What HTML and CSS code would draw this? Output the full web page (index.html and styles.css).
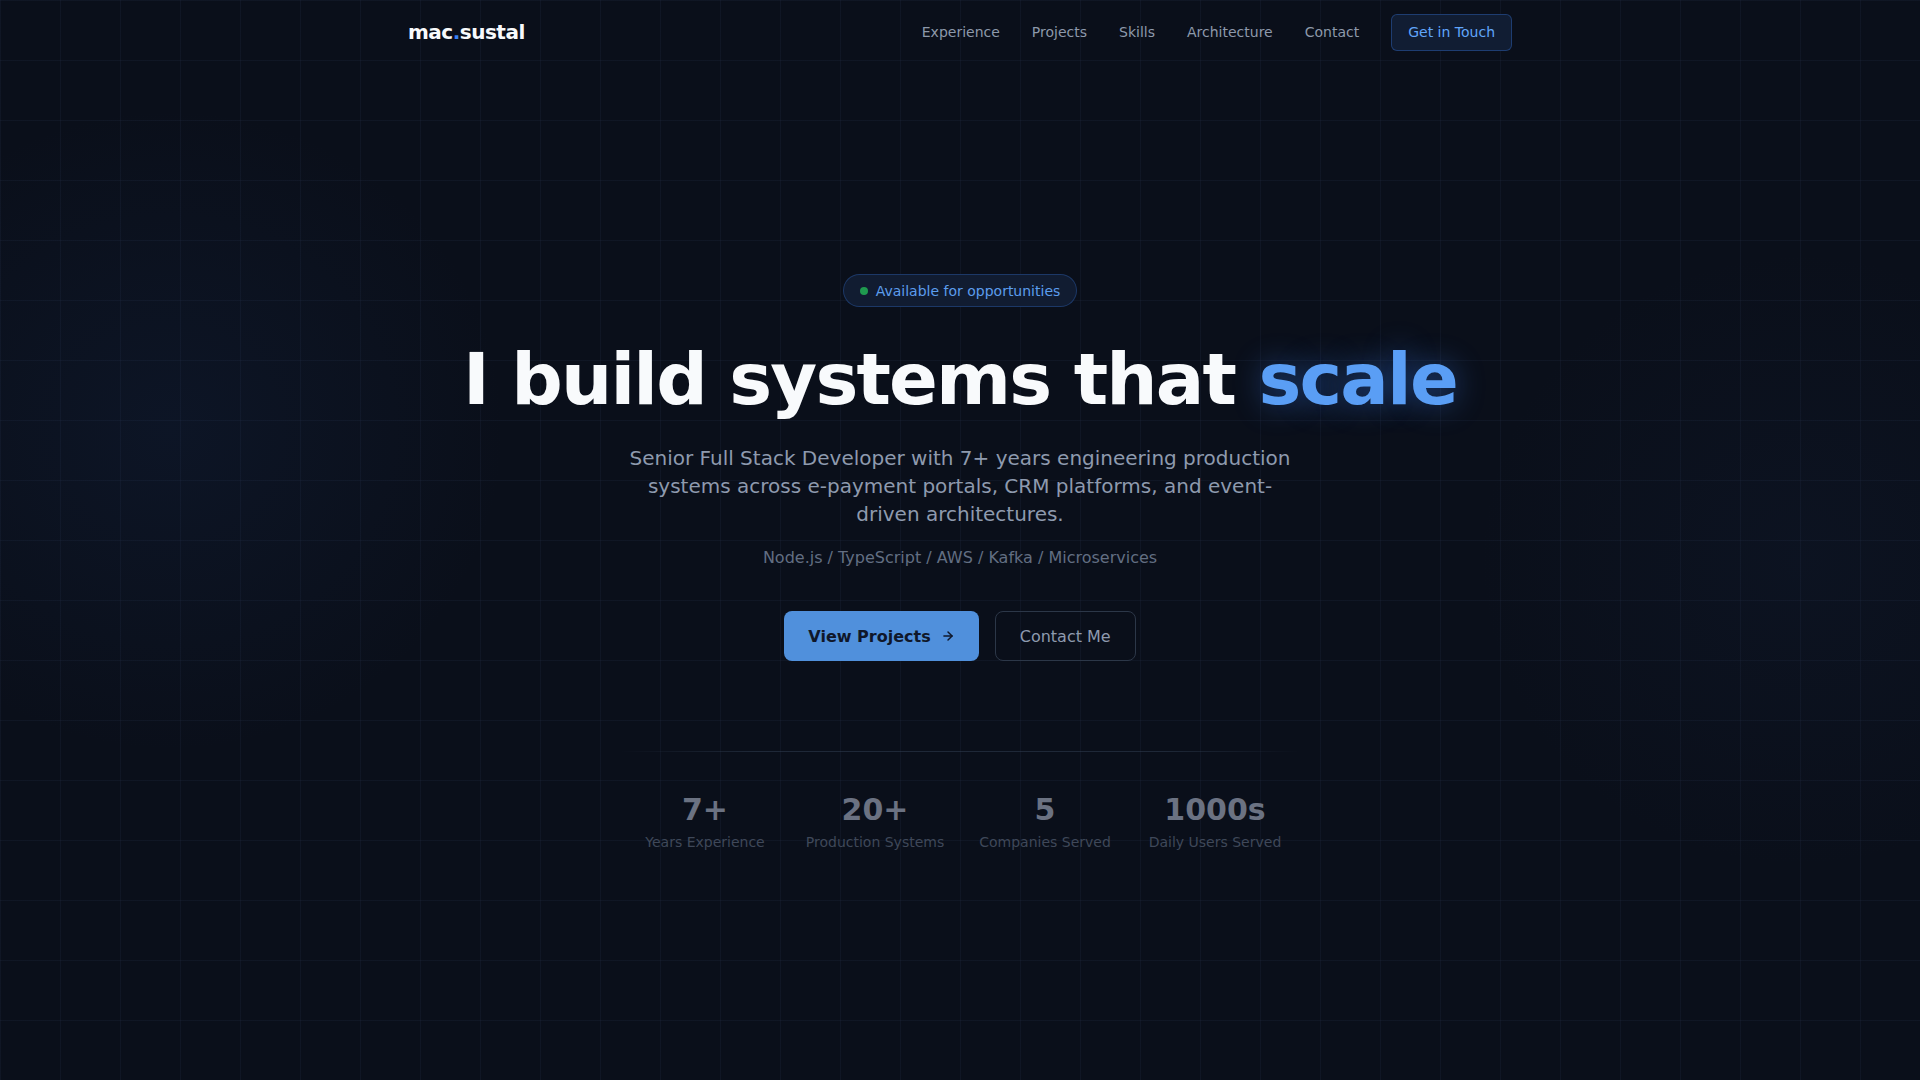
FILE: index.html
```html
<!DOCTYPE html>
<html lang="en">
<head>
<meta charset="utf-8">
<title>mac.sustal</title>
<link rel="stylesheet" href="styles.css">
</head>
<body>
<div class="page">
  <header class="nav">
    <div class="nav-inner">
      <a class="logo" href="#">mac<span class="dot">.</span>sustal</a>
      <nav class="links">
        <a href="#">Experience</a>
        <a href="#">Projects</a>
        <a href="#">Skills</a>
        <a href="#">Architecture</a>
        <a href="#">Contact</a>
        <a class="cta" href="#">Get in Touch</a>
      </nav>
    </div>
  </header>
  <main class="hero">
    <div class="badge"><span class="pulse"></span>Available for opportunities</div>
    <h1 class="title">I build systems that <span class="accent">scale</span></h1>
    <p class="lead">Senior Full Stack Developer with 7+ years engineering production systems across e-payment portals, CRM platforms, and event-driven architectures.</p>
    <p class="stack">Node.js / TypeScript / AWS / Kafka / Microservices</p>
    <div class="actions">
      <a class="btn primary" href="#">View Projects
        <svg width="14" height="14" viewBox="0 0 24 24" fill="none" stroke="currentColor" stroke-width="2.5" stroke-linecap="round" stroke-linejoin="round"><path d="M5 12h14"/><path d="M12 5l7 7-7 7"/></svg>
      </a>
      <a class="btn ghost" href="#">Contact Me</a>
    </div>
    <div class="stats">
      <div class="stat"><div class="num">7+</div><div class="label">Years Experience</div></div>
      <div class="stat"><div class="num">20+</div><div class="label">Production Systems</div></div>
      <div class="stat"><div class="num">5</div><div class="label">Companies Served</div></div>
      <div class="stat"><div class="num">1000s</div><div class="label">Daily Users Served</div></div>
    </div>
  </main>
</div>
</body>
</html>
```

FILE: styles.css
```css
* { box-sizing: border-box; margin: 0; padding: 0; }
html, body { height: 100%; }
body {
  font-family: "DejaVu Sans", Verdana, sans-serif;
  background-color: #0a0f1a;
  color: #e2e8f0;
  overflow: hidden;
}
.page {
  min-height: 100vh;
  background-image:
    radial-gradient(ellipse 480px 460px at 170px 430px, rgba(30, 58, 110, 0.14), transparent 70%),
    radial-gradient(ellipse 460px 440px at 1800px 560px, rgba(30, 50, 90, 0.11), transparent 70%),
    linear-gradient(rgba(40, 52, 78, 0.2) 1px, transparent 1px),
    linear-gradient(90deg, rgba(40, 52, 78, 0.2) 1px, transparent 1px);
  background-size: auto, auto, 60px 60px, 60px 60px;
}
a { text-decoration: none; color: inherit; }

.nav { height: 64px; }
.nav-inner {
  max-width: 1152px;
  margin: 0 auto;
  padding: 0 24px;
  height: 100%;
  display: flex;
  align-items: center;
  justify-content: space-between;
}
.logo {
  font-size: 20px;
  font-weight: 700;
  letter-spacing: -0.5px;
  color: #f8fafc;
}
.logo .dot { color: #3b82f6; }
.links { display: flex; align-items: center; gap: 32px; font-size: 14px; }
.links a { color: #8d99ab; }
.links .cta {
  color: #60a5fa;
  background: #111d33;
  border: 1px solid rgba(59, 130, 246, 0.32);
  border-radius: 6px;
  padding: 9px 16px;
  line-height: 17px;
}

.hero {
  display: flex;
  flex-direction: column;
  align-items: center;
  text-align: center;
  padding-top: 210px;
}
.badge {
  display: flex;
  align-items: center;
  gap: 8px;
  height: 33px;
  padding: 0 16px;
  border-radius: 999px;
  background: #111c31;
  border: 1px solid rgba(59, 130, 246, 0.28);
  color: #5c9ded;
  font-size: 14px;
}
.pulse {
  width: 8px; height: 8px;
  border-radius: 50%;
  background: #1f9a4f;
}
.title {
  margin-top: 33px;
  font-size: 72px;
  line-height: 79px;
  font-weight: 700;
  letter-spacing: -1.8px;
  color: #f8fafc;
}
.accent {
  color: #5a9ef5;
  text-shadow: 0 0 30px rgba(59, 130, 246, 0.45);
}
.lead {
  margin-top: 25px;
  max-width: 672px;
  font-size: 20px;
  line-height: 28px;
  color: #8e9aae;
}
.stack {
  margin-top: 18px;
  font-size: 16px;
  line-height: 24px;
  color: #626e82;
}
.actions {
  margin-top: 41px;
  display: flex;
  gap: 16px;
}
.btn {
  height: 50px;
  display: flex;
  align-items: center;
  gap: 10px;
  border-radius: 8px;
  font-size: 16px;
  padding: 0 24px;
}
.btn.primary {
  background: #5090dc;
  color: #0f172a;
  font-weight: 700;
}
.btn.ghost {
  border: 1px solid #2c3748;
  color: #8e9aae;
  padding: 0 24px;
}
.stats {
  margin-top: 90px;
  width: 680px;
  padding-top: 41px;
  display: grid;
  grid-template-columns: repeat(4, 1fr);
  position: relative;
}
.stats::before {
  content: "";
  position: absolute;
  top: 0; left: 0; right: 0;
  height: 1px;
  background: linear-gradient(90deg, transparent, rgba(51, 65, 85, 0.5) 20%, rgba(51, 65, 85, 0.5) 80%, transparent);
}
.num {
  font-size: 30px;
  line-height: 36px;
  font-weight: 700;
  color: #6b7282;
}
.label {
  margin-top: 4px;
  font-size: 14px;
  line-height: 20px;
  color: #3f4859;
}
```
